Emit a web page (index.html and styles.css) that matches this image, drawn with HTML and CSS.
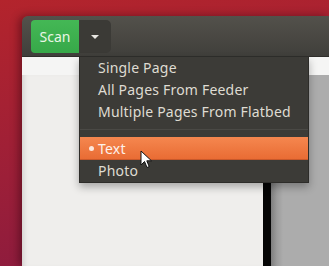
FILE: index.html
```html
<!DOCTYPE html>
<html lang="en">
<head>
  <meta charset="UTF-8">
  <title>Simple Scan</title>
  <link rel="stylesheet" href="styles.css">
</head>
<body>

  <div class="window">
    <div class="headerbar">
      <div class="scan-group">
        <button class="scan-btn">Scan</button>
        <button class="menu-btn">
          <svg width="8" height="4" viewBox="0 0 8 4"><path d="M0 0 L8 0 L4 4 Z" fill="#e8e6e1"/></svg>
        </button>
      </div>
    </div>

    <div class="content">
      <div class="strip"></div>
      <div class="preview">
        <div class="page"></div>
        <div class="page-edge"></div>
        <div class="backdrop"></div>
      </div>
    </div>
  </div>

  <div class="popup">
    <div class="item">Single Page</div>
    <div class="item">All Pages From Feeder</div>
    <div class="item">Multiple Pages From Flatbed</div>
    <div class="separator"></div>
    <div class="item active"><span class="bullet"></span>Text</div>
    <div class="item">Photo</div>
  </div>

  <!-- mouse pointer -->
  <svg class="pointer" width="13" height="20" viewBox="0 0 13 20">
    <path d="M1 1 L1 15 L4.5 11.5 L7 17.5 L9.2 16.6 L6.8 10.8 L11.5 10.8 Z" fill="#fff" stroke="#111" stroke-width="1" stroke-linejoin="round"/>
  </svg>

</body>
</html>
```

FILE: styles.css
```css
body {
  margin: 0;
  width: 329px;
  height: 266px;
  overflow: hidden;
  position: relative;
  font-family: 'Noto Sans', 'DejaVu Sans', sans-serif;
  background: linear-gradient(170deg, #b3242c 0%, #9c1f38 55%, #871a40 100%);
}

.window {
  margin: 16px 0 0 22px;
  height: 250px;
  border-top-left-radius: 6px;
  overflow: hidden;
  box-shadow: -3px 0 8px rgba(40, 0, 10, 0.45);
  display: flex;
  flex-direction: column;
}

.headerbar {
  height: 41px;
  box-sizing: border-box;
  padding: 4px 9px;
  background: linear-gradient(#53514b, #403f3b);
  border-bottom: 1px solid #2f2e2b;
}

.scan-group {
  display: flex;
  height: 33px;
}

.scan-btn {
  width: 48px;
  height: 33px;
  border: none;
  border-radius: 4px 0 0 4px;
  background: linear-gradient(#44b855, #37a849);
  color: #eaf6e6;
  font-family: inherit;
  font-size: 14px;
  padding: 0;
}

.menu-btn {
  width: 32px;
  height: 33px;
  border: none;
  border-radius: 0 5px 5px 0;
  background: #3b3a36;
  padding: 0;
  display: flex;
  align-items: center;
  justify-content: center;
}

.content {
  flex: 1;
  display: flex;
  flex-direction: column;
  background: #f0efed;
}

.strip {
  height: 18px;
  background: #f5f5f4;
  box-shadow: 0 1px 1px rgba(0, 0, 0, 0.08);
}

.preview {
  flex: 1;
  display: flex;
}

.page {
  width: 241px;
  background: #efeeec;
  box-shadow: inset 5px 0 5px -3px rgba(0, 0, 0, 0.12);
}

.page-edge {
  width: 8px;
  background: #050505;
}

.backdrop {
  flex: 1;
  background: linear-gradient(to right, #7e7e7e 0px, #9c9c9c 6px, #acacac 12px);
}

.popup {
  position: absolute;
  left: 79px;
  top: 57px;
  width: 230px;
  box-sizing: border-box;
  background: #3c3b37;
  border: 1px solid #2d2c29;
  border-top: none;
  box-shadow: 0 4px 8px rgba(0, 0, 0, 0.3);
  color: #dfdbd2;
  font-size: 14px;
  letter-spacing: 0.2px;
}

.item {
  height: 22px;
  line-height: 22px;
  padding-left: 18px;
  position: relative;
}

.separator {
  height: 14px;
  position: relative;
}

.separator::after {
  content: "";
  position: absolute;
  left: 0;
  right: 0;
  top: 6px;
  height: 1px;
  background: #4a4945;
}

.item.active {
  height: 23px;
  line-height: 23px;
  background: linear-gradient(#f5874f, #e96c34);
  border-bottom: 1px solid #c8582a;
  box-sizing: border-box;
  color: #fdf1ea;
}

.bullet {
  position: absolute;
  left: 9px;
  top: 9px;
  width: 5px;
  height: 5px;
  border-radius: 50%;
  background: #fde6da;
}

.pointer {
  position: absolute;
  left: 140px;
  top: 150px;
}
```
